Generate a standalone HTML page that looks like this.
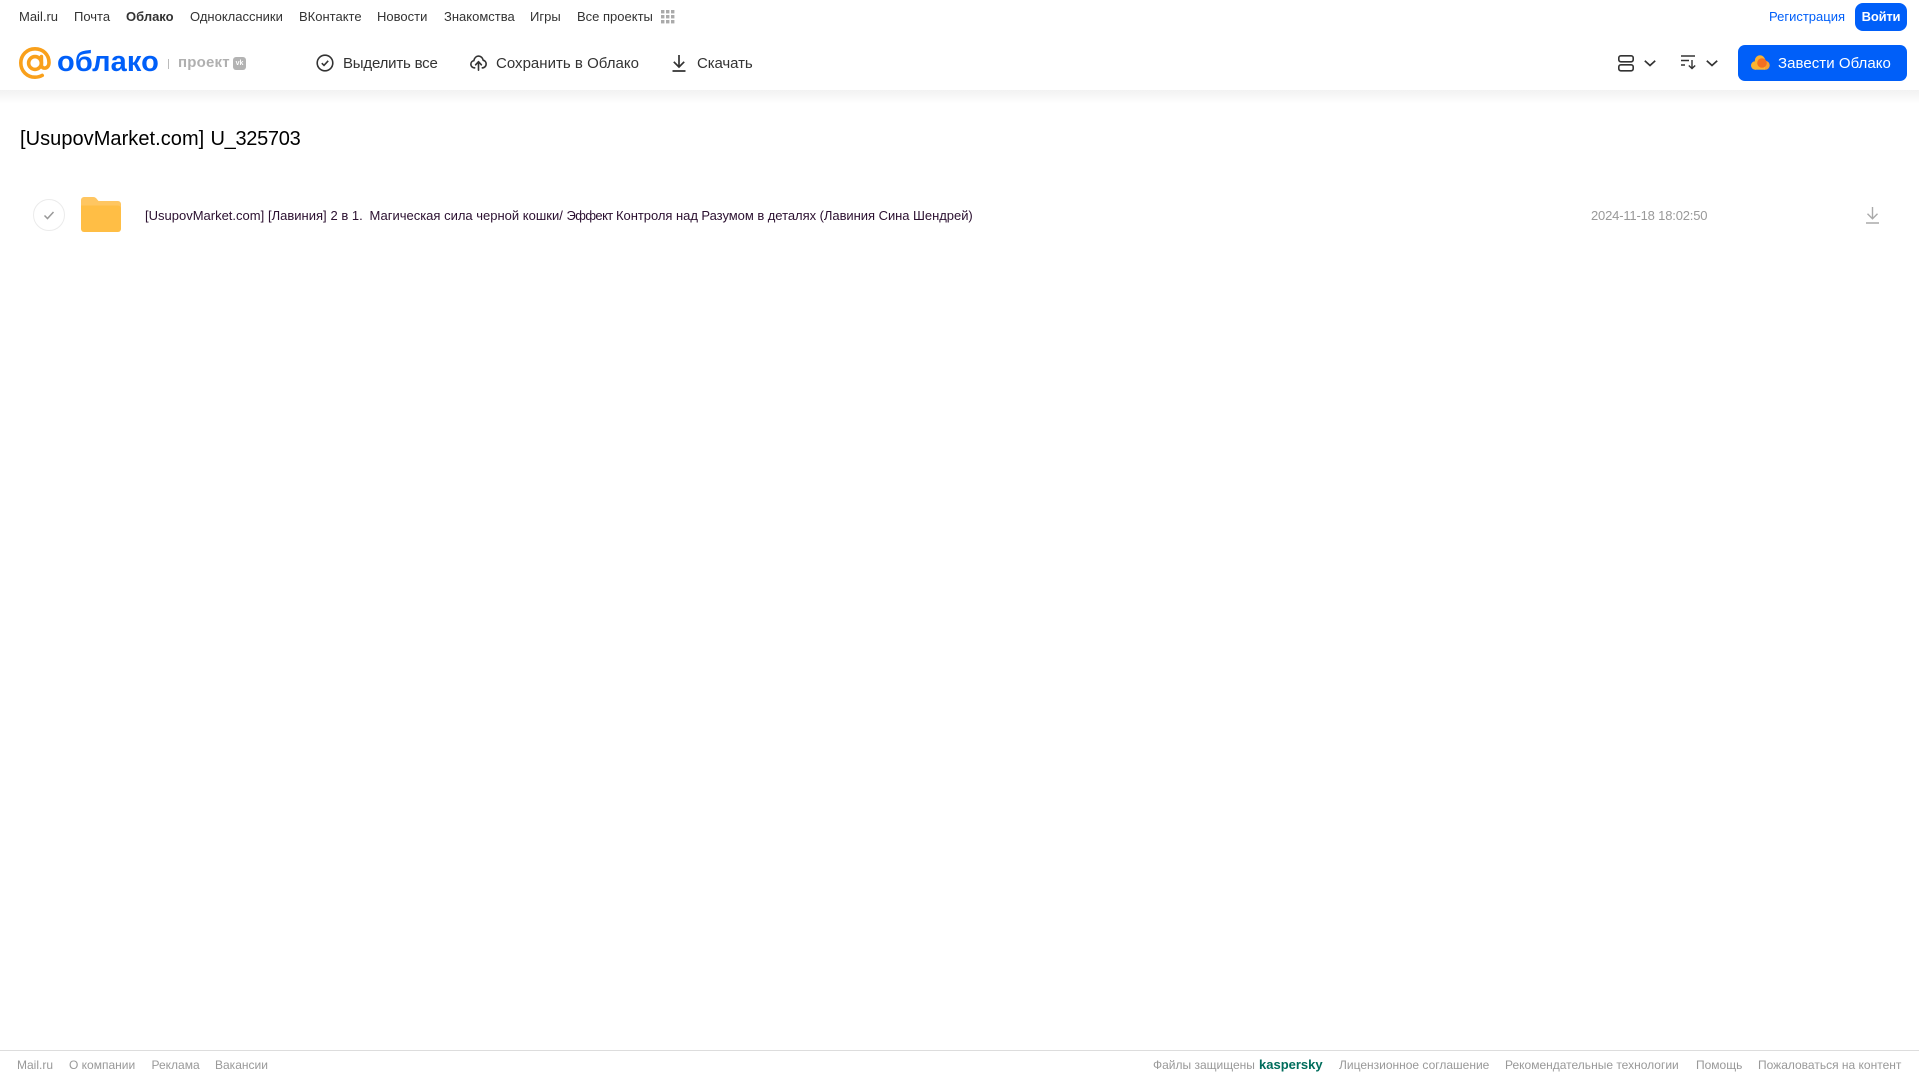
<!DOCTYPE html>
<html lang="ru"><head><meta charset="utf-8"><title>Облако</title>
<style>
html,body{margin:0;padding:0;background:#fff}
body{position:relative;width:1919px;height:1079px;overflow:hidden;font-family:"Liberation Sans",sans-serif}
.t{position:absolute;white-space:nowrap;line-height:20px}
.n{top:7px;font-size:13px;color:#333}
.h{top:54px;font-size:15px;color:#333}
.f{top:1055px;font-size:12px;color:#999}
.r{top:206px;font-size:13px;color:#2b1030}
svg{position:absolute;overflow:visible}
</style></head><body>
<div style="position:absolute;left:0;top:90px;width:1919px;height:14px;background:linear-gradient(#f2f2f2,#fff)"></div>
<span class="t n" style="left:19px">Mail.ru</span>
<span class="t n" style="left:74px">Почта</span>
<span class="t n" style="left:126px;font-weight:bold">Облако</span>
<span class="t n" style="left:190px">Одноклассники</span>
<span class="t n" style="left:299px">ВКонтакте</span>
<span class="t n" style="left:377px">Новости</span>
<span class="t n" style="left:444px">Знакомства</span>
<span class="t n" style="left:530px">Игры</span>
<span class="t n" style="left:577px">Все проекты</span>
<svg style="left:661px;top:10px" width="14" height="14" fill="#aaa"><rect x="0" y="0" width="3.4" height="3.4"/><rect x="5" y="0" width="3.4" height="3.4"/><rect x="10" y="0" width="3.4" height="3.4"/><rect x="0" y="5" width="3.4" height="3.4"/><rect x="5" y="5" width="3.4" height="3.4"/><rect x="10" y="5" width="3.4" height="3.4"/><rect x="0" y="10" width="3.4" height="3.4"/><rect x="5" y="10" width="3.4" height="3.4"/><rect x="10" y="10" width="3.4" height="3.4"/></svg>
<span class="t" style="left:1769px;top:7px;font-size:13px;color:#005ff9">Регистрация</span>
<div style="position:absolute;left:1855px;top:3px;width:52px;height:28px;border-radius:8px;background:#005ff9"></div>
<span class="t" style="left:1855px;width:52px;text-align:center;top:7px;font-size:13px;font-weight:bold;color:#fff;letter-spacing:-.2px">Войти</span>

<svg style="left:19px;top:47px" width="32" height="32" viewBox="0 0 32 32" fill="none" stroke="#f9a01b" stroke-width="3.6"><circle cx="16" cy="16" r="6.4"/><path d="M22.4 9.5V18c0 4.500 7.600 4.500 7.600-2.500C30 7.500 24 1.800 16 1.800S1.800 8 1.800 16 8 30.200 16 30.200c3 0 5.400-.7 7.200-1.800" stroke-linecap="round"/></svg>
<span class="t" style="left:57px;top:47px;line-height:30px;font-size:29px;font-weight:bold;color:#005ff9;letter-spacing:.1px">облако</span>
<div style="position:absolute;left:168px;top:59px;width:1px;height:10px;background:#bbb"></div>
<span class="t" style="left:178px;top:53px;font-size:15px;font-weight:bold;color:#b0b0b0;letter-spacing:.2px">проект</span>
<div style="position:absolute;left:233px;top:57px;width:13px;height:13px;border-radius:3px;background:#b3b3b3;color:#fff;font-size:7px;font-weight:bold;line-height:13px;text-align:center">vk</div>

<svg style="left:316px;top:54px" width="18" height="18" viewBox="0 0 18 18" fill="none" stroke="#333" stroke-width="1.6"><circle cx="9" cy="9" r="7.800"/><path d="M5.800 9.200l2.200 2.200 4.200-4.600"/></svg>
<span class="t h" style="left:343px;letter-spacing:-.2px">Выделить все</span>
<svg style="left:470px;top:55px" width="17" height="16" viewBox="0 0 20 18" preserveAspectRatio="none" fill="none" stroke="#333" stroke-width="1.900" stroke-linejoin="round" stroke-linecap="round"><path d="M5.500 14.500C3 14.500 1 12.800 1 10.400c0-2 1.500-3.700 3.500-4C5.200 3.200 7.400 1.200 10 1.200c2.700 0 5 2 5.500 4.700 2 .3 3.500 2.100 3.500 4.200 0 2.500-2 4.400-4.500 4.400"/><path d="M10 17V8M6.600 11L10 7.500l3.400 3.500"/></svg>
<span class="t h" style="left:496px;letter-spacing:.02px">Сохранить в Облако</span>
<svg style="left:672px;top:55px" width="14" height="17" viewBox="0 0 14 17" fill="none" stroke="#333" stroke-width="1.700"><path d="M7 0v11.500M1.800 6.800L7 12l5.200-5.200M.5 16h13"/></svg>
<span class="t h" style="left:697px;letter-spacing:-.1px">Скачать</span>

<svg style="left:1618px;top:55px" width="16" height="17" viewBox="0 0 16 17" fill="none" stroke="#333" stroke-width="1.600"><rect x=".8" y=".8" width="14.400" height="6" rx="2"/><rect x=".8" y="9.800" width="14.400" height="6" rx="2"/></svg>
<svg style="left:1644px;top:60px" width="12" height="7" viewBox="0 0 12 7" fill="none" stroke="#333" stroke-width="1.700"><path d="M.8 .8L6 5.500 11.200 .8"/></svg>
<svg style="left:1681px;top:55px" width="16" height="14" viewBox="0 0 16 14" fill="none" stroke="#333" stroke-width="1.400"><path d="M0 1h14M0 5.500h8M0 10h4M11 5v8.500M7.800 10.500l3.200 3 3.200-3"/></svg>
<svg style="left:1706px;top:60px" width="12" height="7" viewBox="0 0 12 7" fill="none" stroke="#333" stroke-width="1.700"><path d="M.8 .8L6 5.500 11.200 .8"/></svg>
<div style="position:absolute;left:1738px;top:45px;width:169px;height:36px;border-radius:7px;background:#005ff9"></div>
<svg style="left:1751px;top:55px" width="19" height="16" viewBox="0 0 19 16"><circle cx="9" cy="5.500" r="5.200" fill="#f9b233"/><circle cx="4.200" cy="10.500" r="4.200" fill="#fbb431"/><circle cx="14.200" cy="10.300" r="4.500" fill="#f7a130"/><rect x="4" y="8" width="10" height="6.700" fill="#fbb431"/><circle cx="11" cy="8" r="4.800" fill="#f37021"/></svg>
<span class="t" style="left:1778px;top:54px;font-size:15px;color:#fff;letter-spacing:.05px">Завести Облако</span>

<span class="t" style="left:20px;top:127px;line-height:24px;font-size:20px;color:#000;letter-spacing:.05px">[UsupovMarket.com]</span>
<span class="t" style="left:210.500px;top:127px;line-height:24px;font-size:20px;color:#000;letter-spacing:-.3px">U_325703</span>

<svg style="left:33px;top:199px" width="32" height="32" viewBox="0 0 32 32" fill="none"><circle cx="16" cy="16" r="15.500" stroke="#ebebeb"/><path d="M11.500 16.500l3 3 6-6.500" stroke="#999" stroke-width="1.500"/></svg>
<svg style="left:81px;top:197px" width="40" height="35" viewBox="0 0 40 35"><path d="M0 3a3 3 0 0 1 3-3h9c2 0 3 .8 4 2.200L17.500 4H37a3 3 0 0 1 3 3v5H0z" fill="#ffc661"/><path d="M0 8.500h37a3 3 0 0 1 3 3V32a3 3 0 0 1-3 3H3a3 3 0 0 1-3-3z" fill="#ffbe45"/></svg>
<span class="t r" style="left:145px">[UsupovMarket.com]</span>
<span class="t r" style="left:268px">[Лавиния]</span>
<span class="t r" style="left:330.500px">2 в 1.</span>
<span class="t r" style="left:369.500px">Магическая сила черной кошки/</span>
<span class="t r" style="left:566.500px;letter-spacing:-.6px">Эффект</span>
<span class="t r" style="left:616px;letter-spacing:-.04px">Контроля над Разумом в деталях (Лавиния Сина Шендрей)</span>
<span class="t" style="left:1591px;top:206px;font-size:13px;color:#999;letter-spacing:-.18px">2024-11-18 18:02:50</span>
<svg style="left:1866px;top:207px" width="13" height="17" viewBox="0 0 13 17" fill="none" stroke="#aaa" stroke-width="1.400"><path d="M6.500 0v11.500M1.500 6.800l5 5 5-5M0 16h13"/></svg>

<div style="position:absolute;left:0;top:1050px;width:1919px;height:1px;background:#ddd"></div>
<span class="t f" style="left:17px">Mail.ru</span>
<span class="t f" style="left:69px">О компании</span>
<span class="t f" style="left:151.500px">Реклама</span>
<span class="t f" style="left:215px">Вакансии</span>
<span class="t f" style="left:1153px">Файлы защищены</span>
<span class="t f" style="left:1259px;font-size:13px;font-weight:bold;color:#006d5c">kaspersky</span>
<span class="t f" style="left:1339px">Лицензионное соглашение</span>
<span class="t f" style="left:1505px">Рекомендательные технологии</span>
<span class="t f" style="left:1696px">Помощь</span>
<span class="t f" style="left:1758px">Пожаловаться на контент</span>
</body></html>
